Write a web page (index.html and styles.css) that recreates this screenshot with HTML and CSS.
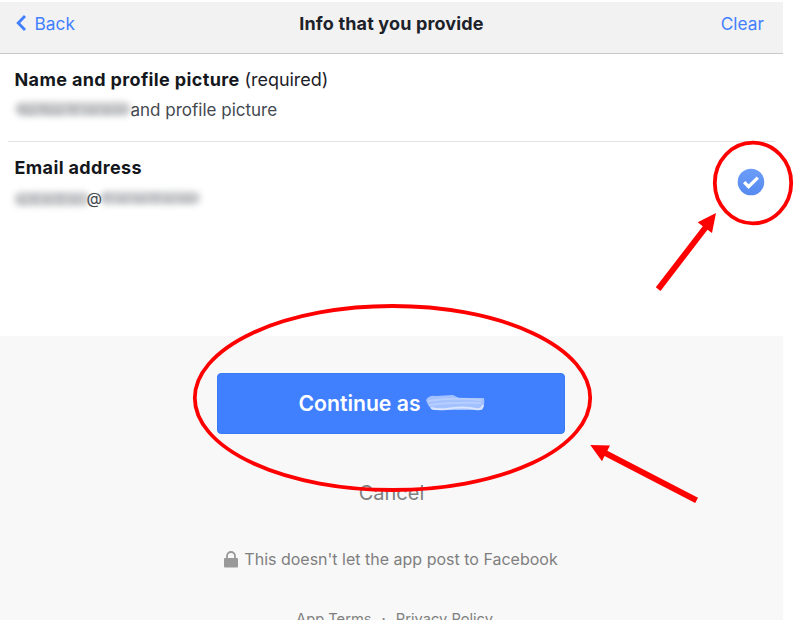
FILE: index.html
```html
<!DOCTYPE html>
<html lang="en">
<head>
<meta charset="utf-8">
<title>Info that you provide</title>
<link rel="stylesheet" href="styles.css">
</head>
<body>
<main class="dialog">
  <header class="bar">
    <a class="back"><svg width="12" height="18" viewBox="0 0 12 18"><path d="M10 2 3.2 9 10 16" fill="none" stroke="#427fff" stroke-width="2.8"/></svg><span class="back-text">Back</span></a>
    <h1 class="title">Info that you provide</h1>
    <a class="clear">Clear</a>
  </header>
  <section class="info">
    <div class="row first">
      <p class="name"><b class="name-bold">Name and profile picture</b><span class="required">(required)</span></p>
      <p class="detail"><svg class="smudge" width="115" height="24" viewBox="0 0 115 24"><g fill="none" stroke="#444950" stroke-linecap="round"><path d="M6 11H108" stroke-width="14" opacity=".29"/><path d="M6 10V14M11 15H18M28 9V14M34 15H44M57 9V14M72 14H79M88 14H94M102 13H105" stroke-width="5" opacity=".14"/></g></svg><span class="picture">and profile picture</span></p>
    </div>
    <div class="row email">
      <div>
        <p class="name"><b class="address">Email address</b></p>
        <p class="detail"><svg class="smudge" width="72" height="24" viewBox="0 0 72 24"><g fill="none" stroke="#444950" stroke-linecap="round"><path d="M5 13H67" stroke-width="14" opacity=".28"/><path d="M6 14V18M18 10V15M30 14H34M44 9V15M56 14H61" stroke-width="5" opacity=".12"/></g></svg><span class="at">@</span><svg class="smudge" width="102" height="24" viewBox="0 0 102 24"><g fill="none" stroke="#444950" stroke-linecap="round"><path d="M5 12H93" stroke-width="13" opacity=".28"/><path d="M6 8V14M18 14H24M35 14H43M54 9V14M65 15H70M80 14H90" stroke-width="5" opacity=".12"/></g></svg></p>
      </div>
      <svg class="check" width="28" height="28" viewBox="0 0 28 28"><defs><linearGradient id="disc" x2="0" y2="1"><stop stop-color="#6c9df9"/><stop offset="1" stop-color="#568af0"/></linearGradient></defs><circle cx="14" cy="14" r="13.3" fill="url(#disc)"/><path d="m7.2 14.2 4.4 4.5L20.8 9.6" fill="none" stroke="#fff" stroke-width="3.3"/></svg>
    </div>
  </section>
  <section class="actions">
    <button class="continue"><span class="continue-text">Continue as</span><svg class="swipe" width="62" height="22" viewBox="0 0 62 22"><path d="M2 8Q5 3 12 4L29 3 35 6 60 6Q61 14 58 18L9 18Q4 15 2 8" fill="#a3c0ff"/><path d="M4 9Q28 5 58 8M5 13Q28 10 57 11" fill="none" stroke="#b6cdff" stroke-width="2"/><path d="M7 16Q13 18 22 17 39 14 52 17 58 18 59 13" fill="none" stroke="#d9e5ff" stroke-width="2"/></svg></button>
    <a class="cancel">Cancel</a>
    <p class="notice"><svg width="14" height="17" viewBox="0 0 14 17"><path d="M3 8V5a4 4 0 0 1 8 0v3" fill="none" stroke="#999" stroke-width="1.8"/><rect y="7" width="14" height="9.5" rx="1" fill="#999"/></svg><span class="notice-text">This doesn't let the app post to Facebook</span></p>
    <footer class="links"><a class="terms">App Terms</a><span class="dot">·</span><a class="privacy">Privacy Policy</a></footer>
  </section>
</main>
<svg class="marks" width="802" height="620" viewBox="0 0 802 620">
  <g fill="none" stroke="#f00" stroke-width="3.8"><ellipse cx="753" cy="183" rx="38.2" ry="40.3"/><ellipse cx="392.5" cy="398" rx="197.7" ry="92"/></g>
  <path fill="#f00" d="M716 213 697.7 222.3 702.8 226.2 655.8 287.3 660.5 291 707.5 229.7 712 233ZM590.3 445 602 461.3 604.5 456.1 695.2 503 698 497.8 607.3 450.8 610 445.6Z"/>
</svg>
</body>
</html>
```

FILE: styles.css
```css
* { box-sizing: border-box; }
body { margin: 0; width: 802px; height: 620px; overflow: hidden; background: #fff; font-family: Inter, "Liberation Sans", sans-serif; }
p, h1 { margin: 0; }
svg { display: block; flex: none; overflow: visible; }
span, a, b, h1 { white-space: nowrap; }
.dialog { width: 783px; height: 620px; padding-top: 2px; overflow: hidden; }
.bar { height: 52px; padding: 0 19px 9px 15px; display: grid; grid-template-columns: 1fr auto 1fr; align-items: center; background: #f2f2f2; border-bottom: 1px solid #c8c8c8; font-size: 17.3px; color: #427fff; }
.back { display: flex; align-items: center; gap: 7.5px; }
.title { margin: 0 -2px 0 2px; font-size: 18px; font-weight: 650; letter-spacing: .15px; color: #1d2129; }
.clear { text-align: right; }
.info { height: 282px; padding: 0 8px; }
.row { padding: 13px 7px 0 6.5px; }
.first { height: 88px; border-bottom: 1px solid #e2e3e5; }
.email { display: flex; justify-content: space-between; }
.name { display: flex; height: 25px; align-items: center; gap: 5px; color: #1d2129; font-size: 18px; }
.name b { font-weight: 660; letter-spacing: .36px; color: #14171c; }
.required { letter-spacing: -.05px; }
.detail { display: flex; align-items: center; height: 24px; margin-top: 6px; padding-left: 1px; color: #444950; font-size: 17px; }
.at { margin: 0 -1px; font-size: 16px; }
.smudge { filter: blur(3px); }
.check { margin: 13px 3px 0 0; }
.actions { height: 284px; padding-top: 37px; background: #f8f8f8; display: flex; flex-direction: column; align-items: center; }
.continue { width: 348px; height: 61px; margin-right: 1px; flex: none; border: 1px solid #397af5; border-radius: 4px; background: #4080ff; display: flex; align-items: center; justify-content: center; gap: 3px; padding: 0 0 1px 2px; color: #fff; font: 600 21.2px Inter, sans-serif; }
.swipe { filter: blur(.7px); }
.cancel { margin-top: 46px; height: 27px; line-height: 27px; font-size: 20px; color: #7f7f7f; }
.notice { display: flex; align-items: center; gap: 6px; height: 24px; margin: 42px 1px 0 0; color: #7f7f7f; font-size: 16px; }
.links { display: flex; gap: 10px; height: 22px; line-height: 22px; margin: 39px 0 0 6px; font-size: 14.7px; color: #7f7f7f; }
.marks { position: absolute; left: 0; top: 0; }
```
